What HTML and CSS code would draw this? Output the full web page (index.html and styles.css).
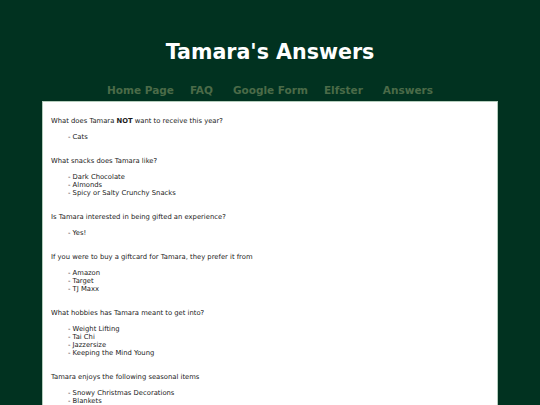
FILE: index.html
```
<!DOCTYPE html>
<html>
<head>
<meta charset="utf-8">
<link rel="stylesheet" href="styles.css">
</head>
<body>
<header class="header">
  <h1 class="title">Tamara's Answers</h1>
  <nav class="nav">
    <a class="nav-link">Home Page</a>
    <a class="nav-link">FAQ</a>
    <a class="nav-link wide">Google Form</a>
    <a class="nav-link">Elfster</a>
    <a class="nav-link wide">Answers</a>
  </nav>
</header>
<main class="content">
  <section class="qa">
    <p class="question">What does Tamara <b>NOT</b> want to receive this year?</p>
    <ul class="answers">
      <li>- Cats</li>
    </ul>
  </section>
  <section class="qa">
    <p class="question">What snacks does Tamara like?</p>
    <ul class="answers">
      <li>- Dark Chocolate</li>
      <li>- Almonds</li>
      <li>- Spicy or Salty Crunchy Snacks</li>
    </ul>
  </section>
  <section class="qa">
    <p class="question">Is Tamara interested in being gifted an experience?</p>
    <ul class="answers">
      <li>- Yes!</li>
    </ul>
  </section>
  <section class="qa">
    <p class="question">If you were to buy a giftcard for Tamara, they prefer it from</p>
    <ul class="answers">
      <li>- Amazon</li>
      <li>- Target</li>
      <li>- TJ Maxx</li>
    </ul>
  </section>
  <section class="qa">
    <p class="question">What hobbies has Tamara meant to get into?</p>
    <ul class="answers">
      <li>- Weight Lifting</li>
      <li>- Tai Chi</li>
      <li>- Jazzersize</li>
      <li>- Keeping the Mind Young</li>
    </ul>
  </section>
  <section class="qa">
    <p class="question">Tamara enjoys the following seasonal items</p>
    <ul class="answers">
      <li>- Snowy Christmas Decorations</li>
      <li>- Blankets</li>
    </ul>
  </section>
</main>
</body>
</html>
```
FILE: styles.css
```
html, body {
  margin: 0;
  padding: 0;
  background: #013220;
  height: 100%;
  overflow: hidden;
}
body {
  font-family: "DejaVu Sans", Verdana, sans-serif;
}
.header {
  padding-top: 39px;
  text-align: center;
}
.title {
  margin: 0;
  color: #ffffff;
  font-size: 20.6px;
  line-height: 26px;
  font-weight: bold;
}
.nav {
  display: flex;
  justify-content: center;
  gap: 16px;
  margin-top: 18px;
  height: 18px;
  line-height: 14px;
}
.nav-link {
  color: #4b6b48;
  font-size: 10.5px;
  font-weight: bold;
}
.nav-link.wide {
  margin-left: 4px;
}
.content {
  margin: 0 42px;
  width: 456px;
  height: 304px;
  background: #ffffff;
  border: 1px solid #b5cdbd;
  border-bottom: none;
  padding: 15px 0 0 8px;
  box-sizing: border-box;
  color: #1a1a1a;
  font-size: 6.8px;
  line-height: 8px;
}
.qa {
  margin-bottom: 16px;
}
.question {
  margin: 0 0 8px 0;
}
.answers {
  list-style: none;
  margin: 0;
  padding: 0 0 0 17px;
}
```
